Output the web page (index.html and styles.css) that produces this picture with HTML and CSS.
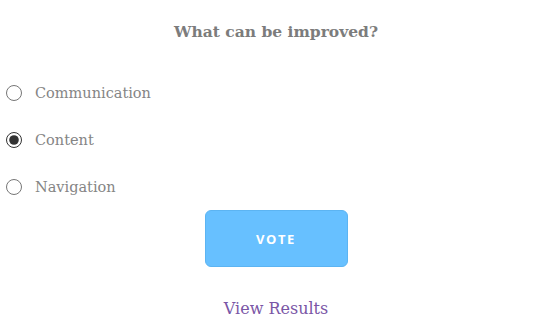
FILE: index.html
```html
<!DOCTYPE html>
<html lang="en">
<head>
  <meta charset="UTF-8">
  <meta name="viewport" content="width=device-width, initial-scale=1.0">
  <title>Poll</title>
  <link rel="stylesheet" href="styles.css">
</head>
<body>
  <div class="poll">
    <h2 class="poll-title">What can be improved?</h2>
    <form class="poll-form">
      <label class="option">
        <input type="radio" name="improve" value="communication">
        <span>Communication</span>
      </label>
      <label class="option">
        <input type="radio" name="improve" value="content" checked>
        <span>Content</span>
      </label>
      <label class="option">
        <input type="radio" name="improve" value="navigation">
        <span>Navigation</span>
      </label>
      <div class="actions">
        <button type="button" class="vote-btn">VOTE</button>
      </div>
    </form>
    <div class="results">
      <a href="#" class="results-link">View Results</a>
    </div>
  </div>
</body>
</html>
```

FILE: styles.css
```css
/* poll widget */
body {
  margin: 0;
  padding: 0;
  background: #fff;
  font-family: "DejaVu Serif", "Liberation Serif", serif;
  overflow: hidden;
}
.poll {
  width: 536px;
}
.poll-title {
  margin: 0;
  padding: 22px 0 0 16px;
  height: 24px;
  text-align: center;
  font-size: 15.5px;
  font-weight: bold;
  color: #7c7c7c;
  line-height: 20px;
}
.poll-form {
  margin: 0;
  padding: 23px 0 0 6px;
}
.option {
  display: flex;
  align-items: center;
  height: 47px;
  font-size: 14.5px;
  color: #858585;
  cursor: pointer;
}
.option input {
  margin: 0 13px 0 0;
  width: 16px;
  height: 16px;
  accent-color: #333;
}
.actions {
  display: flex;
  justify-content: center;
  padding-left: 10px;
}
.vote-btn {
  width: 143px;
  height: 57px;
  background-color: #67c0ff;
  color: #fff;
  border: 1px solid #5cb4f2;
  border-radius: 6px;
  font-family: "Open Sans", "Liberation Sans", sans-serif;
  font-weight: bold;
  font-size: 13px;
  letter-spacing: 1.6px;
  cursor: pointer;
}
.results {
  padding: 32px 0 0 16px;
  text-align: center;
}
.results-link {
  font-size: 16px;
  color: #7a56a6;
  text-decoration: none;
}
```
